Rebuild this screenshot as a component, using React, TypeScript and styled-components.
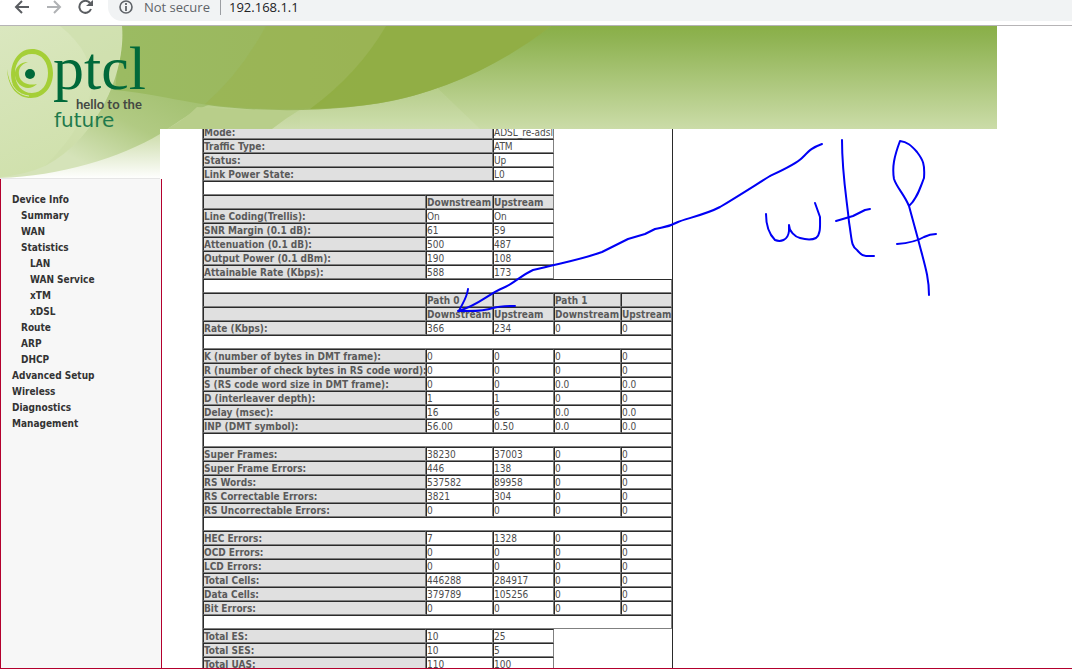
import React from "react";
import styled, { createGlobalStyle } from "styled-components";

const GlobalStyle = createGlobalStyle`
  *, *::before, *::after { box-sizing: border-box; }
  html, body, #root { height: 100%; }
  body {
    margin: 0;
    background: #fff;
    font-family: "DejaVu Sans Condensed", "DejaVu Sans", sans-serif;
    font-size: 10px;
    color: #555;
    overflow: hidden;
  }
`;

const RED = "#b3002d";
const UI_FONT = `"Open Sans", "Noto Sans", sans-serif`;

const Screen = styled.div`
  position: relative;
  display: flex;
  flex-direction: column;
  height: 100vh;
  overflow: hidden;
  border-bottom: 1px solid ${RED};
`;

const Toolbar = styled.header`
  display: flex;
  flex: 0 0 26px;
  align-items: flex-start;
  padding-left: 12px;
  border-bottom: 1px solid #b6b4b6;
  overflow: hidden;
`;

const ToolButton = styled.button<{ $dim?: boolean }>`
  flex: 0 0 32px;
  height: 16px;
  padding: 0;
  border: 0;
  background: none;
  color: ${(p) => (p.$dim ? "#b0b2b5" : "#5a5d61")};
  text-align: left;
  svg { display: block; }
`;

const AddressBar = styled.div`
  display: flex;
  flex: 1;
  height: 21px;
  padding-left: 10px;
  background: #f1f3f4;
  border-bottom-left-radius: 14px;
  font: 13px/15px ${UI_FONT};
  color: #5f6368;
`;

const SecurityButton = styled.button`
  display: flex;
  width: 103px;
  height: 15px;
  gap: 10px;
  padding: 0;
  border: 0;
  border-right: 1px solid #9b9ea2;
  background: none;
  color: inherit;
  font: inherit;
  white-space: nowrap;
  svg { flex: none; }
`;

const UrlInput = styled.input`
  flex: 1;
  height: 15px;
  padding: 0 0 0 8px;
  border: 0;
  outline: 0;
  background: none;
  color: #202124;
  font: inherit;
`;

const Page = styled.div`
  display: flex;
  flex: 1;
  min-height: 0;
`;

const Sidebar = styled.aside`
  display: flex;
  flex-direction: column;
  flex: 0 0 160px;
  min-width: 0;
`;

const LogoPanel = styled.div`
  flex: 0 0 153px;
  border-bottom: 1px solid #e6e6e6;
  overflow: hidden;
  svg { display: block; }
`;

const Nav = styled.nav`
  flex: 1;
  width: 162px;
  padding: 13px 0 0 11px;
  border: solid ${RED};
  border-width: 0 1px;
  background: #f7f7f7;
`;

const NavLink = styled.a<{ $level: number }>`
  display: block;
  padding-left: ${(p) => p.$level * 9}px;
  line-height: 16px;
  font-weight: bold;
  color: #333;
  text-decoration: none;
`;

const Main = styled.main`
  display: flex;
  flex-direction: column;
  flex: 1;
  min-width: 0;
`;

const Banner = styled.div`
  flex: 0 0 103px;
  max-width: 837px;
  overflow: hidden;
  svg { display: block; width: 100%; height: 100%; }
`;

const Frame = styled.div`
  flex: 1;
  min-height: 0;
  padding-left: 42px;
  overflow: hidden;
`;

const StatsTable = styled.table`
  width: 471px;
  margin-top: -4px;
  table-layout: fixed;
  border-spacing: 0;
  border: solid #2a2a2a;
  border-width: 0 1px;
  border-left-color: #808080;
`;

const Col = styled.col<{ $w: number }>`
  width: ${(p) => p.$w}px;
`;

const cell = `
  height: 14px;
  padding: 2px 0 0;
  border: 1px solid;
  border-color: #2a2a2a #808080 #808080 #2a2a2a;
  line-height: 10px;
  text-align: left;
  white-space: nowrap;
`;

const HeadCell = styled.th`
  ${cell}
  background: #e0e0e0;
  color: #5a5a5a;
`;

const DataCell = styled.td`
  ${cell}
  color: #4c4c4c;
`;

const Ink = styled.svg`
  position: absolute;
  top: 0;
  left: 0;
  pointer-events: none;
`;

const NAV: [string, number][] = [
  ["Device Info", 0],
  ["Summary", 1],
  ["WAN", 1],
  ["Statistics", 1],
  ["LAN", 2],
  ["WAN Service", 2],
  ["xTM", 2],
  ["xDSL", 2],
  ["Route", 1],
  ["ARP", 1],
  ["DHCP", 1],
  ["Advanced Setup", 0],
  ["Wireless", 0],
  ["Diagnostics", 0],
  ["Management", 0],
];

type Row =
  | { kind: "wide"; label: string; value: string }
  | { kind: "gap"; span: number }
  | { kind: "head"; cells: string[] }
  | { kind: "data"; label: string; values: string[] };

const wide = (label: string, value: string): Row => ({ kind: "wide", label, value });
const gap = (span: number): Row => ({ kind: "gap", span });
const head = (...cells: string[]): Row => ({ kind: "head", cells });
const data = (label: string, ...values: string[]): Row => ({ kind: "data", label, values });

const ROWS: Row[] = [
  wide("Mode:", "ADSL_re-adsl"),
  wide("Traffic Type:", "ATM"),
  wide("Status:", "Up"),
  wide("Link Power State:", "L0"),
  gap(3),
  head("", "Downstream", "Upstream"),
  data("Line Coding(Trellis):", "On", "On"),
  data("SNR Margin (0.1 dB):", "61", "59"),
  data("Attenuation (0.1 dB):", "500", "487"),
  data("Output Power (0.1 dBm):", "190", "108"),
  data("Attainable Rate (Kbps):", "588", "173"),
  gap(5),
  head("", "Path 0", "", "Path 1", ""),
  head("", "Downstream", "Upstream", "Downstream", "Upstream"),
  data("Rate (Kbps):", "366", "234", "0", "0"),
  gap(5),
  data("K (number of bytes in DMT frame):", "0", "0", "0", "0"),
  data("R (number of check bytes in RS code word):", "0", "0", "0", "0"),
  data("S (RS code word size in DMT frame):", "0", "0", "0.0", "0.0"),
  data("D (interleaver depth):", "1", "1", "0", "0"),
  data("Delay (msec):", "16", "6", "0.0", "0.0"),
  data("INP (DMT symbol):", "56.00", "0.50", "0.0", "0.0"),
  gap(5),
  data("Super Frames:", "38230", "37003", "0", "0"),
  data("Super Frame Errors:", "446", "138", "0", "0"),
  data("RS Words:", "537582", "89958", "0", "0"),
  data("RS Correctable Errors:", "3821", "304", "0", "0"),
  data("RS Uncorrectable Errors:", "0", "0", "0", "0"),
  gap(5),
  data("HEC Errors:", "7", "1328", "0", "0"),
  data("OCD Errors:", "0", "0", "0", "0"),
  data("LCD Errors:", "0", "0", "0", "0"),
  data("Total Cells:", "446288", "284917", "0", "0"),
  data("Data Cells:", "379789", "105256", "0", "0"),
  data("Bit Errors:", "0", "0", "0", "0"),
  gap(5),
  data("Total ES:", "10", "25"),
  data("Total SES:", "10", "5"),
  data("Total UAS:", "110", "100"),
];

function StatsRow({ row }: { row: Row }) {
  switch (row.kind) {
    case "wide":
      return (
        <tr>
          <HeadCell scope="row" colSpan={2}>{row.label}</HeadCell>
          <DataCell>{row.value}</DataCell>
        </tr>
      );
    case "gap":
      return <tr><DataCell colSpan={row.span} /></tr>;
    case "head":
      return <tr>{row.cells.map((c, i) => <HeadCell key={i} scope="col">{c}</HeadCell>)}</tr>;
    case "data":
      return (
        <tr>
          <HeadCell scope="row">{row.label}</HeadCell>
          {row.values.map((v, i) => <DataCell key={i}>{v}</DataCell>)}
        </tr>
      );
  }
}

/* Leaf artwork shared by the logo panel and the banner, in one coordinate space. */
function Leaves({ id }: { id: string }) {
  return (
    <>
      <defs>
        <linearGradient id={`${id}-sky`} x1="0" y1="0" x2="0" y2="103" gradientUnits="userSpaceOnUse">
          <stop offset="0" stopColor="#89af47" />
          <stop offset="0.12" stopColor="#8fb352" />
          <stop offset="1" stopColor="#cbdca8" />
        </linearGradient>
        <linearGradient id={`${id}-stem`} x1="160" y1="50" x2="110" y2="150" gradientUnits="userSpaceOnUse">
          <stop offset="0" stopColor="#a2c06f" />
          <stop offset="0.5" stopColor="#b1ca83" />
          <stop offset="1" stopColor="#d5e3b9" />
        </linearGradient>
        <linearGradient id={`${id}-under`} x1="0" y1="80" x2="0" y2="153" gradientUnits="userSpaceOnUse">
          <stop offset="0" stopColor="#b9cf8d" />
          <stop offset="0.35" stopColor="#cbdba8" />
          <stop offset="1" stopColor="#ffffff" />
        </linearGradient>
        <linearGradient id={`${id}-pale`} x1="0" y1="0" x2="60" y2="150" gradientUnits="userSpaceOnUse">
          <stop offset="0" stopColor="#dae7bf" />
          <stop offset="1" stopColor="#cfe0ab" />
        </linearGradient>
        <linearGradient id={`${id}-leaf`} x1="122" y1="0" x2="400" y2="0" gradientUnits="userSpaceOnUse">
          <stop offset="0" stopColor="#9bbb62" />
          <stop offset="1" stopColor="#9bb55a" />
        </linearGradient>
      </defs>
      <rect width="1000" height="153" fill={`url(#${id}-sky)`} />
      <path d="M100 60 H300 V103 H160 V153 H0 V120Z" fill={`url(#${id}-under)`} />
      <path d="M110 50 L230 80 C205 74 198 83 160 108 C120 132 60 150 0 152 V100Z" fill={`url(#${id}-stem)`} />
      <path d="M197 81 C235 84 270 85 301 83 Q286 92 272 103 H167 Q184 94 197 81Z" fill="#b8ce8a" />
      <path d="M301 83 C340 81 390 66 425 50 L480 103 H272 Q286 92 301 83Z" fill="#fff" opacity="0.08" />
      <path d="M122 0 H551 C505 35 460 57 405 72 C340 88 245 87 190 76 C160 71 140 66 115 64Z" fill={`url(#${id}-leaf)`} />
      <path d="M266 0 H386 Q362 46 317 82 Q260 85 205 78 Q240 48 266 0Z" fill="#99b451" opacity="0.65" />
      <path d="M386 0 H551 C500 40 440 67 380 77 Q350 82 310 83 Q358 48 386 0Z" fill="#8fad42" opacity="0.85" />
      <path d="M0 0 H122 C126 48 96 113 45 140 Q25 149 0 151Z" fill={`url(#${id}-pale)`} />
      <path d="M60 0 H122 C124 48 98 112 45 140 Q130 55 60 0Z" fill="#c9dba6" opacity="0.45" />
    </>
  );
}

function Logo() {
  return (
    <svg width="160" height="153" viewBox="0 0 160 153" role="img" aria-label="ptcl hello to the future">
      <Leaves id="logo" />
      <path fillRule="evenodd" fill="#a5cf37" d="M32 23 C44 23 53 33 53 47 C53 61 44 72 31 72 C18 72 8 62 7 43 C8 50 10 56 13 59 C7 42 16 23 32 23Z M32 28 C22 28 15 36 15 47 C15 59 22 67 32 67 C42 67 48 58 48 47 C48 36 42 28 32 28Z" />
      <path d="M9 48 C10 60 18 69 29 70" fill="none" stroke="#d6e4b9" strokeWidth="1" />
      <path fill="#a5cf37" d="M28 36 C20 36 14 42 15 50 C17 61 29 66 37 58 C29 60 20 57 19 49 C18 43 21 38 28 36Z" />
      <circle cx="30" cy="48" r="5" fill="#00693a" />
      <text x="53" y="63" fontFamily="Liberation Serif, serif" fontSize="62" fill="#00693a">ptcl</text>
      <text x="76" y="83" fontFamily="Lato, sans-serif" fontWeight="bold" fontSize="13" fill="#444843">hello to the</text>
      <text x="54" y="101" fontFamily="DejaVu Sans, sans-serif" fontSize="20" fill="#1f7a4c">future</text>
    </svg>
  );
}

const STROKES = [
  "M822 144 C811 148 809 151 802 158 C796 164 785 169 770 176 C757 184 740 195 720 207 C705 215 684 219 678 222 C667 228 662 227 655 229 L645 234 L628 239 L602 252 C580 260 565 262 533 270 C520 276 515 283 503 288 C488 294 478 306 458 311",
  "M468 289 C467 298 462 304 459 311 C472 311 482 312 493 308 C500 306 507 306 515 306",
  "M766 214 C766 226 770 235 775 240 C780 242 788 241 789 231 V225 C789 231 795 237 800 238 C807 240 812 240 816 238 C821 234 820 225 820 217 L815 203",
  "M842 140 C842 175 847 200 849 222 C852 240 851 246 857 250 C861 254 861 256 866 256 H874",
  "M836 221 L853 216 L865 210 L870 209",
  "M909 206 C917 199 920 188 924 178 C925 164 923 160 917 152 C911 145 907 142 900 141 C894 157 892 167 894 179 C897 188 904 194 909 206 L918 239 C925 266 929 277 929 295",
  "M897 244 C910 243 919 240 924 237 C930 234 932 234 936 234",
];

export default function App() {
  return (
    <>
      <GlobalStyle />
      <Screen>
        <Toolbar>
          <ToolButton aria-label="Back">
            <svg width="20" height="16" viewBox="0 0 20 16" fill="none" stroke="currentColor" strokeWidth="2">
              <path d="M17 7 H4 M10 1 L4 7 L10 13" />
            </svg>
          </ToolButton>
          <ToolButton aria-label="Forward" $dim>
            <svg width="20" height="16" viewBox="0 0 20 16" fill="none" stroke="currentColor" strokeWidth="2">
              <path d="M3 7 H16 M10 1 L16 7 L10 13" />
            </svg>
          </ToolButton>
          <ToolButton aria-label="Reload">
            <svg width="20" height="16" viewBox="0 0 20 16" fill="none" stroke="currentColor" strokeWidth="2">
              <path d="M14 3 A6 6 0 1 0 15 9" />
              <path d="M17 0 V6 H10Z" fill="currentColor" stroke="none" />
            </svg>
          </ToolButton>
          <AddressBar>
            <SecurityButton>
              <svg width="16" height="16" viewBox="0 0 16 16" fill="none" stroke="currentColor">
                <circle cx="8" cy="7" r="6" strokeWidth="1.6" />
                <path d="M8 6 V11 M8 3 V5" strokeWidth="1.8" />
              </svg>
              Not secure
            </SecurityButton>
            <UrlInput aria-label="Address" defaultValue="192.168.1.1" />
          </AddressBar>
        </Toolbar>
        <Page>
          <Sidebar>
            <LogoPanel><Logo /></LogoPanel>
            <Nav>
              {NAV.map(([label, level]) => (
                <NavLink key={label} href="#" $level={level}>{label}</NavLink>
              ))}
            </Nav>
          </Sidebar>
          <Main>
            <Banner>
              <svg viewBox="160 0 837 103" preserveAspectRatio="xMinYMin slice" aria-hidden="true">
                <Leaves id="banner" />
              </svg>
            </Banner>
            <Frame>
              <StatsTable>
                <colgroup>
                  <Col $w={223} />
                  <Col $w={67} />
                  <Col $w={61} />
                  <Col $w={67} />
                  <Col $w={51} />
                </colgroup>
                <tbody>
                  {ROWS.map((row, i) => <StatsRow key={i} row={row} />)}
                </tbody>
              </StatsTable>
            </Frame>
          </Main>
        </Page>
        <Ink width="1072" height="669" viewBox="0 0 1072 669" fill="none" stroke="#0000f5" strokeWidth="2" strokeLinecap="round" strokeLinejoin="round" aria-hidden="true">
          {STROKES.map((d) => <path key={d} d={d} />)}
        </Ink>
      </Screen>
    </>
  );
}
